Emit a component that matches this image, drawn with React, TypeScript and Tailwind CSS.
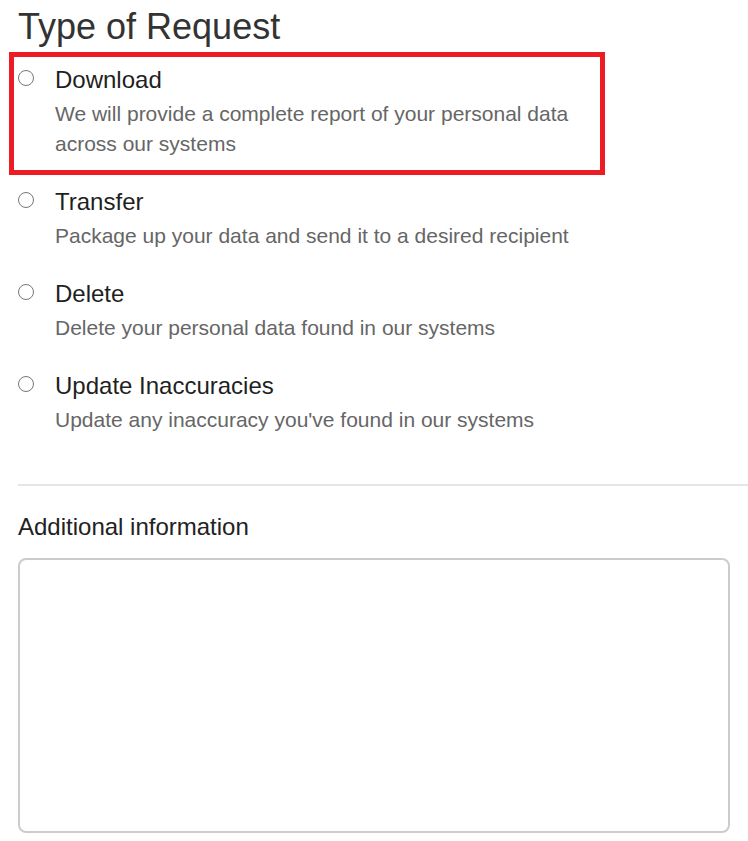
const options = [
  {
    title: "Download",
    desc: "We will provide a complete report of your personal data across our systems",
  },
  { title: "Transfer", desc: "Package up your data and send it to a desired recipient" },
  { title: "Delete", desc: "Delete your personal data found in our systems" },
  { title: "Update Inaccuracies", desc: "Update any inaccuracy you've found in our systems" },
];

export default function App() {
  return (
    <div className="min-h-screen bg-white pt-[6px] pl-[18px] font-['Liberation_Sans',Arial,sans-serif]">
      <h1 className="text-[36px] leading-[42px] text-[#333]">Type of Request</h1>

      <div className="mt-[17px] flex flex-col gap-[28px]">
        {options.map((o, i) => (
          <label key={o.title} className="relative flex items-start gap-[21px] cursor-pointer">
            {i === 0 && (
              <div className="pointer-events-none absolute -left-[9px] -top-[13px] h-[123px] w-[596px] border-[5px] border-[#ed1c24]" />
            )}
            <span className="mt-[5px] h-4 w-4 shrink-0 rounded-full border border-[#767676] bg-white" />
            <div className="w-[540px]">
              <div className="text-[24px] leading-[30px] text-[#1f1f1f]">{o.title}</div>
              <p className="mt-[4px] text-[21px] leading-[30px] text-[#666]">{o.desc}</p>
            </div>
          </label>
        ))}
      </div>

      <div className="mt-[49px] h-[2px] bg-[#e6e6e6]" />

      <div className="mt-[26px] text-[24px] leading-[30px] text-[#222]">Additional information</div>
      <textarea className="mt-[16px] block h-[275px] w-[712px] resize-none rounded-[8px] border-2 border-[#ccc] bg-white p-2 outline-none" />
    </div>
  );
}
